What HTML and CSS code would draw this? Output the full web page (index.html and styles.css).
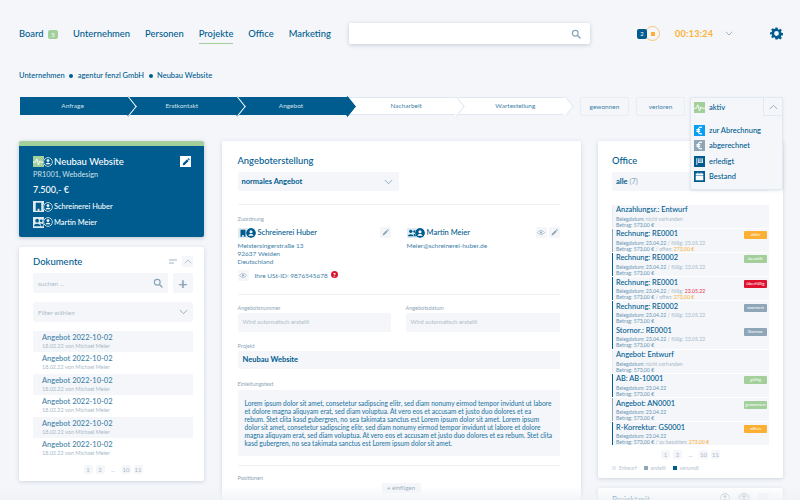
FILE: index.html
```html
<!DOCTYPE html>
<html>
<head>
  <title>Neubau Website</title>
  <link rel="stylesheet" href="styles.css">
</head>
<body>
  <svg class="sprite" width="0" height="0">
    <symbol id="i-search" viewBox="0 0 16 16"><circle cx="6.8" cy="6.8" r="4.6" fill="none" stroke="currentColor" stroke-width="1.9"/><path d="M10.3 10.3L14.5 14.5" fill="none" stroke="currentColor" stroke-width="2.2" stroke-linecap="round"/></symbol>
    <symbol id="i-down" viewBox="0 0 16 10"><path d="M1.5 1.5L8 8l6.5-6.5" fill="none" stroke="currentColor" stroke-width="1.6"/></symbol>
    <symbol id="i-up" viewBox="0 0 16 10"><path d="M1.5 8.5L8 2l6.5 6.5" fill="none" stroke="currentColor" stroke-width="1.6"/></symbol>
    <symbol id="i-gear" viewBox="0 0 24 24"><path fill="currentColor" fill-rule="evenodd" d="M10 1h4l.6 3.1 1.9.8 2.6-1.8 2.8 2.8-1.8 2.6.8 1.9 3.1.6v4l-3.1.6-.8 1.9 1.8 2.6-2.8 2.8-2.6-1.8-1.9.8L14 23h-4l-.6-3.1-1.9-.8-2.6 1.8-2.8-2.8 1.8-2.6-.8-1.9L0 14v-4l3.1-.6.8-1.9-1.8-2.6 2.8-2.8 2.6 1.8 1.9-.8zM12 7.6a4.4 4.4 0 1 0 0 8.8 4.4 4.4 0 0 0 0-8.8z"/></symbol>
    <symbol id="i-pencil" viewBox="0 0 12 12"><path fill="currentColor" d="M1 11l.6-3 6-6 2.4 2.4-6 6zM8.400 1.200l.8-.7a.8.8 0 0 1 1.100 0l1.200 1.200a.8.8 0 0 1 0 1.100l-.7.8z"/></symbol>
    <symbol id="i-eye" viewBox="0 0 16 10"><path fill="none" stroke="currentColor" stroke-width="1.200" d="M1 5c3.500-5 10.500-5 14 0-3.500 5-10.500 5-14 0z"/><circle cx="8" cy="5" r="2" fill="currentColor"/></symbol>
    <symbol id="i-person" viewBox="0 0 14 14"><circle cx="7" cy="7" r="6.200" fill="none" stroke="currentColor" stroke-width="1.100"/><circle cx="7" cy="5" r="2" fill="currentColor"/><path fill="currentColor" d="M3.500 10.300c.3-3 6.700-3 7 0z"/></symbol>
    <symbol id="i-person-solid" viewBox="0 0 14 14"><path fill="currentColor" fill-rule="evenodd" d="M7 0a7 7 0 1 1 0 14A7 7 0 0 1 7 0zm0 3a2.100 2.100 0 1 0 0 4.200A2.100 2.100 0 0 0 7 3zM3.400 10.800h7.200c-.3-3.200-6.900-3.200-7.200 0z"/></symbol>
    <symbol id="i-build" viewBox="0 0 12 12"><path fill="currentColor" d="M3 2h6v8.500H7V8.500H5v2H3z"/></symbol>
    <symbol id="i-people" viewBox="0 0 12 12"><circle cx="4.500" cy="4" r="2" fill="currentColor"/><path fill="currentColor" d="M1 10c.2-3.500 6.800-3.500 7 0z"/><circle cx="9" cy="4.200" r="1.500" fill="currentColor"/><path fill="currentColor" d="M8.500 10h3c0-2.500-2-3-3.500-2.700.3.700.5 1.600.5 2.700z"/></symbol>
    <symbol id="i-pulse" viewBox="0 0 16 16"><path fill="none" stroke="currentColor" stroke-width="1.300" d="M0 9h3.500l2-5 2.500 9 2-6 1 2H16"/></symbol>
    <symbol id="i-euro" viewBox="0 0 16 16"><path fill="none" stroke="currentColor" stroke-width="1.700" d="M11.500 3.500c-3-1.300-5.500.8-5.500 4.500s2.500 5.800 5.500 4.500M3.500 6.700h5.500M3.500 9.300h5.500"/></symbol>
    <symbol id="i-flag" viewBox="0 0 16 16"><path fill="currentColor" d="M3.500 3h1.300v10H3.500zM6 3.500h7v6.500H6z"/><path fill="none" stroke="#005c8f" stroke-width=".7" d="M6.500 5.500h6M6.500 7.500h6M8.500 3.500v6.500M10.500 3.500v6.500"/></symbol>
    <symbol id="i-calendar" viewBox="0 0 16 16"><path fill="currentColor" d="M2.500 7h11v6.500h-11zM2.500 3.500h11V6h-11z"/><path fill="currentColor" d="M5 2h1.200v2H5zM9.800 2H11v2H9.800z"/></symbol>
  </svg>

  <div class="page">
    <header class="topbar">
      <nav class="nav">
        <a class="nav-item nav-board">Board <span class="nav-badge">5</span></a>
        <a class="nav-item">Unternehmen</a>
        <a class="nav-item">Personen</a>
        <a class="nav-item active">Projekte</a>
        <a class="nav-item">Office</a>
        <a class="nav-item">Marketing</a>
      </nav>
      <div class="global-search"><svg class="icon-search"><use href="#i-search"/></svg></div>
      <div class="timer-widget">
        <span class="timer-count">2</span>
        <span class="timer-ring"><span class="timer-dot"></span></span>
      </div>
      <div class="timer">00:13:24</div>
      <svg class="timer-chevron"><use href="#i-down"/></svg>
      <svg class="gear"><use href="#i-gear"/></svg>
    </header>

    <div class="breadcrumb">
      <span>Unternehmen</span><i class="crumb-dot"></i>
      <span>agentur fenzl GmbH</span><i class="crumb-dot"></i>
      <span>Neubau Website</span>
    </div>

    <div class="status-row">
      <div class="stepper">
        <div class="step done">Anfrage</div>
        <div class="step done">Erstkontakt</div>
        <div class="step done">Angebot</div>
        <div class="step">Nacharbeit</div>
        <div class="step">Wartestellung</div>
      </div>
      <div class="outcome">gewonnen</div>
      <div class="outcome">verloren</div>
      <div class="state-menu">
        <div class="state-head">
          <span class="state-tile green"><svg><use href="#i-pulse"/></svg></span>
          <span class="state-current">aktiv</span>
          <span class="state-toggle"><svg><use href="#i-up"/></svg></span>
        </div>
        <div class="state-list">
          <div class="state-item"><span class="state-tile sky"><svg><use href="#i-euro"/></svg></span>zur Abrechnung</div>
          <div class="state-item"><span class="state-tile grey"><svg><use href="#i-euro"/></svg></span>abgerechnet</div>
          <div class="state-item"><span class="state-tile navy"><svg><use href="#i-flag"/></svg></span>erledigt</div>
          <div class="state-item"><span class="state-tile navy"><svg><use href="#i-calendar"/></svg></span>Bestand</div>
        </div>
      </div>
    </div>

    <main class="columns">
      <div class="col">
        <section class="project-card">
          <div class="project-title">
            <span class="duo"><span class="duo-tile green"><svg><use href="#i-pulse"/></svg></span><svg class="duo-person"><use href="#i-person"/></svg></span>
            <span class="project-name">Neubau Website</span>
            <span class="project-edit"><svg><use href="#i-pencil"/></svg></span>
          </div>
          <div class="project-sub">PR1001, Webdesign</div>
          <div class="project-price">7.500,- €</div>
          <div class="project-link"><span class="duo"><span class="duo-tile"><svg><use href="#i-build"/></svg></span><svg class="duo-person"><use href="#i-person"/></svg></span>Schreinerei Huber</div>
          <div class="project-link"><span class="duo"><span class="duo-tile"><svg><use href="#i-people"/></svg></span><svg class="duo-person"><use href="#i-person"/></svg></span>Martin Meier</div>
        </section>

        <section class="card docs-card">
          <div class="docs-head">
            <h2>Dokumente</h2>
            <span class="sort-icon"><i></i><i></i></span>
            <span class="collapse"><svg><use href="#i-up"/></svg></span>
          </div>
          <div class="docs-search">
            <div class="field search-field">suchen ...<svg><use href="#i-search"/></svg></div>
            <div class="add-btn">+</div>
          </div>
          <div class="field filter-field">Filter wählen<svg><use href="#i-down"/></svg></div>
          <div class="doc-list">
            <div class="doc-row"><b>Angebot 2022-10-02</b><small>18.02.22 von Michael Meier</small></div>
            <div class="doc-row"><b>Angebot 2022-10-02</b><small>18.02.22 von Michael Meier</small></div>
            <div class="doc-row"><b>Angebot 2022-10-02</b><small>18.02.22 von Michael Meier</small></div>
            <div class="doc-row"><b>Angebot 2022-10-02</b><small>18.02.22 von Michael Meier</small></div>
            <div class="doc-row"><b>Angebot 2022-10-02</b><small>18.02.22 von Michael Meier</small></div>
            <div class="doc-row"><b>Angebot 2022-10-02</b><small>18.02.22 von Michael Meier</small></div>
          </div>
          <div class="pager"><span>1</span><span>2</span><em>...</em><span>10</span><span>11</span></div>
        </section>
      </div>

      <section class="card offer-card">
        <h2>Angeboterstellung</h2>
        <div class="field offer-type">normales Angebot<svg><use href="#i-down"/></svg></div>
        <hr>
        <label>Zuordnung</label>
        <div class="contacts">
          <div class="contact">
            <div class="contact-head">
              <span class="contact-tile"><svg><use href="#i-build"/></svg><svg class="contact-person"><use href="#i-person-solid"/></svg></span>
              <b>Schreinerei Huber</b>
              <span class="mini-btn"><svg><use href="#i-pencil"/></svg></span>
            </div>
            <p>Meistersingerstraße 13<br>92637 Weiden<br>Deutschland</p>
          </div>
          <div class="contact">
            <div class="contact-head">
              <span class="contact-tile"><svg><use href="#i-people"/></svg><svg class="contact-person"><use href="#i-person-solid"/></svg></span>
              <b>Martin Meier</b>
              <span class="mini-btn"><svg class="eye"><use href="#i-eye"/></svg></span>
              <span class="mini-btn"><svg><use href="#i-pencil"/></svg></span>
            </div>
            <p>Meier@schreinerei-huber.de</p>
          </div>
        </div>
        <div class="vat-row">
          <span class="mini-btn"><svg class="eye"><use href="#i-eye"/></svg></span>
          <span class="vat-text">Ihre USt-ID: 9876545678</span>
          <span class="help">?</span>
        </div>
        <hr>
        <div class="two-fields">
          <div><label>Angebotsnummer</label><div class="input placeholder">Wird automatisch erstellt</div></div>
          <div><label>Angebotsdatum</label><div class="input placeholder">Wird automatisch erstellt</div></div>
        </div>
        <label>Projekt</label>
        <div class="input project-input">Neubau Website</div>
        <label class="intro-label">Einleitungstext</label>
        <div class="intro-text">Lorem ipsum dolor sit amet, consetetur sadipscing elitr, sed diam nonumy eirmod tempor invidunt ut labore et dolore magna aliquyam erat, sed diam voluptua. At vero eos et accusam et justo duo dolores et ea rebum. Stet clita kasd gubergren, no sea takimata sanctus est Lorem ipsum dolor sit amet. Lorem ipsum dolor sit amet, consetetur sadipscing elitr, sed diam nonumy eirmod tempor invidunt ut labore et dolore magna aliquyam erat, sed diam voluptua. At vero eos et accusam et justo duo dolores et ea rebum. Stet clita kasd gubergren, no sea takimata sanctus est Lorem ipsum dolor sit amet.</div>
        <hr class="intro-rule">
        <label class="positions-label">Positionen</label>
        <div class="insert-btn"><span>+</span> einfügen</div>
      </section>

      <div class="col">
        <section class="card office-card">
          <h2>Office</h2>
          <div class="field office-filter"><b>alle</b>&nbsp;<span>(7)</span></div>
          <div class="office-list">
            <div class="office-row"><b>Anzahlungsr.: Entwurf</b><small><u>Belegdatum:</u> nicht vorhanden</small><small><u>Betrag: 573,00 €</u></small></div>
            <div class="office-row mid"><b>Rechnung: RE0001</b><span class="tag orange">aktiv</span><small><u>Belegdatum: 23.04.22</u> / fällig: 23.05.22</small><small><u>Betrag: 573,00 €</u> / offen: <i class="warn">273,00 €</i></small></div>
            <div class="office-row sent"><b>Rechnung: RE0002</b><span class="tag green">bezahlt</span><small><u>Belegdatum: 23.04.22</u> / fällig: 23.05.22</small><small><u>Betrag: 573,00 €</u></small></div>
            <div class="office-row sent"><b>Rechnung: RE0001</b><span class="tag red">überfällig</span><small><u>Belegdatum: 23.04.22</u> / fällig: <i class="late">23.05.22</i></small><small><u>Betrag: 573,00 €</u> / offen: <i class="warn">273,00 €</i></small></div>
            <div class="office-row sent"><b>Rechnung: RE0002</b><span class="tag grey">storniert</span><small><u>Belegdatum: 23.04.22</u> / fällig: 23.05.22</small><small><u>Betrag: 573,00 €</u></small></div>
            <div class="office-row sent"><b>Stornor.: RE0001</b><span class="tag grey">Stornor.</span><small><u>Belegdatum: 23.04.22</u> / fällig: 23.05.22</small><small><u>Betrag: 573,00 €</u></small></div>
            <div class="office-row"><b>Angebot: Entwurf</b><small><u>Belegdatum:</u> nicht vorhanden</small><small><u>Betrag: 573,00 €</u></small></div>
            <div class="office-row sent"><b>AB: AB-10001</b><span class="tag green">gültig</span><small><u>Belegdatum: 23.04.22</u></small><small><u>Betrag: 573,00 €</u></small></div>
            <div class="office-row mid"><b>Angebot: AN0001</b><span class="tag green">gewonnen</span><small><u>Belegdatum: 23.04.22</u></small><small><u>Betrag: 573,00 €</u></small></div>
            <div class="office-row sent"><b>R-Korrektur: GS0001</b><span class="tag orange">offen</span><small><u>Belegdatum: 23.04.22</u></small><small><u>Betrag: 573,00 €</u> / zu bezahlen: <i class="warn">273,00 €</i></small></div>
          </div>
          <div class="pager"><span>1</span><span>2</span><em>...</em><span>10</span><span>11</span></div>
          <div class="legend">
            <span><i class="key draft"></i>Entwurf</span>
            <span><i class="key made"></i>erstellt</span>
            <span><i class="key sent"></i>versandt</span>
          </div>
        </section>
        <section class="card next-card">
          <h2>Projektzeit</h2>
          <svg class="next-person"><use href="#i-person"/></svg>
          <span class="next-pill"><svg class="next-person"><use href="#i-person"/></svg></span>
          <span class="collapse"></span>
        </section>
      </div>
    </main>
  </div>
  <div class="bottom-fade"></div>
</body>
</html>
```

FILE: styles.css
```css
* {
  box-sizing: border-box;
  margin: 0;
  padding: 0;
}

html, body {
  height: 500px;
  overflow: hidden;
}

body {
  font-family: Lato, "Open Sans", sans-serif;
  background-color: #f4f6fa;
  color: #005c8f;
  position: relative;
}

.sprite {
  position: absolute;
}

.page {
  height: 500px;
  padding: 23px 17px 0 19px;
  overflow: hidden;
}

/* top bar */
.topbar {
  display: flex;
  align-items: center;
  height: 21px;
}

.topbar > * {
  flex-shrink: 0;
}

.nav {
  display: flex;
  gap: 15px;
  width: 330px;
  font-size: 9.400px;
  font-weight: 500;
}

.nav-item {
  position: relative;
  line-height: 21px;
  white-space: nowrap;
}

.nav-item.active::after {
  content: "";
  position: absolute;
  left: 0;
  right: 0;
  bottom: 0;
  height: 1px;
  background-color: #a3cf9b;
}

.nav-badge {
  display: inline-block;
  width: 10px;
  height: 9px;
  margin-left: 2px;
  border-radius: 2px;
  background-color: #a3cf9b;
  color: #fff;
  font-size: 6px;
  line-height: 9px;
  text-align: center;
  vertical-align: 0;
}

.global-search {
  display: flex;
  align-items: center;
  justify-content: flex-end;
  width: 241px;
  height: 21px;
  padding-right: 9px;
  background-color: #fff;
  border-radius: 2px;
  box-shadow: 0 1px 4px rgba(60, 80, 110, 0.25);
}

.icon-search {
  width: 10px;
  height: 10px;
  color: #8aa5b8;
}

.timer-widget {
  display: flex;
  align-items: center;
  margin-left: 47px;
}

.timer-count {
  width: 10px;
  height: 10px;
  border-radius: 2px;
  background-color: #005c8f;
  color: #fff;
  font-size: 6px;
  line-height: 10px;
  text-align: center;
  position: relative;
  z-index: 1;
}

.timer-ring {
  display: flex;
  align-items: center;
  justify-content: center;
  width: 15px;
  height: 15px;
  margin-left: -2px;
  border: 1px solid #f9c678;
  border-radius: 50%;
}

.timer-dot {
  width: 4px;
  height: 4px;
  background-color: #fbb034;
}

.timer {
  width: 38px;
  margin-left: 15px;
  color: #fbb034;
  font-size: 9px;
  font-weight: 700;
  letter-spacing: 0.3px;
  white-space: nowrap;
}

.timer-chevron {
  width: 8px;
  height: 5px;
  margin-left: 12px;
  color: #8aa5b8;
}

.gear {
  width: 13px;
  height: 13px;
  margin-left: 37px;
}

/* breadcrumb */
.breadcrumb {
  display: flex;
  align-items: center;
  gap: 4.500px;
  margin-top: 26px;
  font-size: 7.500px;
  font-weight: 500;
  line-height: 12px;
}

.crumb-dot {
  width: 4px;
  height: 4px;
  border-radius: 50%;
  background-color: #005c8f;
}

/* status row */
.status-row {
  display: flex;
  align-items: flex-start;
  margin-top: 15px;
  margin-left: 1px;
  position: relative;
}

.stepper {
  display: flex;
  width: 546px;
  margin-right: 14px;
}

.step {
  position: relative;
  width: 109.200px;
  height: 18px;
  padding-left: 8px;
  background-color: #fff;
  border-top: 1px solid #dfe8f1;
  border-bottom: 1px solid #dfe8f1;
  color: #3f82a8;
  font-size: 6.500px;
  line-height: 16px;
  text-align: center;
}

.step::after {
  content: "";
  position: absolute;
  top: 2px;
  right: -6px;
  width: 12px;
  height: 12px;
  background-color: #fff;
  border-top: 1px solid #dfe8f1;
  border-right: 1px solid #dfe8f1;
  transform: rotate(45deg) skew(6deg, 6deg);
  z-index: 1;
}

.step.done {
  padding: 0 4px 0 0;
  background-color: #005c8f;
  border-color: #005c8f;
  color: #cfe0ea;
}

.step.done::after {
  background-color: #005c8f;
  border-color: #fff;
}

.step.done:nth-child(3)::after {
  border-color: #005c8f;
}

.outcome {
  width: 49px;
  height: 19px;
  margin-right: 7px;
  border: 1px solid #e8edf3;
  border-radius: 2px;
  color: #3f82a8;
  font-size: 6.500px;
  line-height: 17px;
  text-align: center;
}

.state-menu {
  position: absolute;
  top: 0;
  left: 670px;
  width: 93px;
  height: 93px;
  background-color: #f4f6fa;
  border: 1px solid #e3e9f0;
  border-radius: 2px;
  box-shadow: 0 1px 3px rgba(60, 80, 110, 0.12);
  z-index: 3;
}

.state-head {
  display: flex;
  align-items: center;
  height: 18px;
  padding-left: 3px;
  font-size: 7.500px;
  font-weight: 500;
}

.state-tile {
  display: flex;
  align-items: center;
  justify-content: center;
  width: 11px;
  height: 11px;
  margin-right: 4px;
  color: #fff;
}

.state-tile svg {
  width: 11px;
  height: 11px;
}

.green {
  background-color: #a3cf9b;
}

.sky {
  background-color: #0a9ef2;
}

.grey {
  background-color: #8fa6b8;
}

.navy {
  background-color: #005c8f;
}

.state-current {
  flex: 1;
}

.state-toggle {
  display: flex;
  align-items: center;
  justify-content: center;
  width: 19px;
  height: 18px;
  border-left: 1px solid #e3e9f0;
  border-bottom: 1px solid #e3e9f0;
  color: #8aa5b8;
}

.state-toggle svg {
  width: 9px;
  height: 6px;
}

.state-list {
  padding: 7px 3px 0;
}

.state-item {
  display: flex;
  align-items: center;
  height: 15.300px;
  font-size: 7.500px;
  font-weight: 500;
}

/* columns */
.columns {
  display: grid;
  grid-template-columns: 185px 359px 185px;
  gap: 17.500px;
  align-items: start;
  margin-top: 25px;
}

.col {
  display: flex;
  flex-direction: column;
  gap: 10px;
}

.card {
  background-color: #fff;
  border-radius: 2px;
  box-shadow: 0 1px 4px rgba(60, 80, 110, 0.2);
}

h2 {
  font-size: 9.400px;
  font-weight: 500;
  line-height: 13px;
}

svg {
  display: block;
}

.field {
  display: flex;
  align-items: center;
  justify-content: space-between;
  background-color: #f4f6fa;
  border-radius: 2px;
}

/* project card */
.project-card {
  height: 96px;
  padding: 10px 13px 0 14px;
  background-color: #005c8f;
  border-top: 5px solid #a3cf9b;
  border-radius: 2px;
  color: #fff;
  box-shadow: 0 1px 4px rgba(60, 80, 110, 0.3);
}

.project-title {
  display: flex;
  align-items: center;
  height: 11px;
  font-size: 9.500px;
  font-weight: 500;
}

.project-name {
  flex: 1;
}

.project-edit {
  display: flex;
  align-items: center;
  justify-content: center;
  width: 11px;
  height: 11px;
  background-color: #fff;
  color: #005c8f;
}

.project-edit svg {
  width: 8px;
  height: 8px;
}

.duo {
  display: flex;
  align-items: center;
  width: 20px;
  margin-right: 1px;
}

.duo-tile {
  display: flex;
  width: 11px;
  height: 11px;
  background-color: #dfe9f0;
  color: #005c8f;
}

.duo-tile.green {
  background-color: #a3cf9b;
  color: #fff;
}

.duo-tile svg {
  width: 11px;
  height: 11px;
}

.duo-person {
  width: 10px;
  height: 10px;
  margin-left: -1px;
  color: #fff;
  background-color: #005c8f;
  border-radius: 50%;
}

.project-sub {
  margin-top: 3px;
  font-size: 7.300px;
  line-height: 10px;
  color: #cfe0ea;
}

.project-price {
  margin-top: 4px;
  font-size: 9px;
  font-weight: 500;
  line-height: 12px;
}

.project-link {
  display: flex;
  align-items: center;
  height: 11px;
  margin-top: 4.500px;
  font-size: 7.400px;
  font-weight: 500;
}

.project-price + .project-link {
  margin-top: 5px;
}

/* documents */
.docs-card {
  height: 234px;
  padding: 8px 11px 0 14px;
}

.docs-head {
  display: flex;
  align-items: center;
  height: 12px;
}

.docs-head h2 {
  flex: 1;
  font-size: 9.500px;
}

.sort-icon {
  display: flex;
  flex-direction: column;
  gap: 1px;
  margin-right: 5px;
}

.sort-icon i {
  display: block;
  width: 8px;
  height: 2px;
  background-color: #cfd9e3;
}

.sort-icon i + i {
  width: 5px;
}

.collapse {
  display: flex;
  align-items: center;
  justify-content: center;
  width: 11px;
  height: 11px;
  background-color: #f4f6fa;
  color: #a5b8c8;
}

.collapse svg {
  width: 8px;
  height: 5px;
}

.docs-search {
  display: flex;
  justify-content: space-between;
  margin-top: 6px;
}

.search-field {
  width: 135px;
  height: 20px;
  padding: 0 5px 0 5px;
  color: #aebdcb;
  font-size: 6.500px;
}

.search-field svg {
  width: 10px;
  height: 10px;
  color: #8aa5b8;
}

.add-btn {
  width: 20px;
  height: 20px;
  border-radius: 2px;
  background-color: #f4f6fa;
  color: #8aa5b8;
  font-size: 16px;
  font-weight: 700;
  line-height: 19px;
  text-align: center;
}

.filter-field {
  height: 20px;
  margin-top: 9px;
  padding: 0 5px;
  color: #aebdcb;
  font-size: 6.500px;
}

.filter-field svg {
  width: 9px;
  height: 6px;
  color: #8aa5b8;
}

.doc-list {
  margin-top: 9px;
}

.doc-row {
  height: 21.400px;
  padding: 2px 9px 0;
}

.doc-row:nth-child(odd) {
  background-color: #f4f6fa;
}

.doc-row b {
  display: block;
  color: #3f82a8;
  font-size: 7.500px;
  font-weight: 500;
  line-height: 10px;
}

.doc-row small {
  display: block;
  color: #a9bac9;
  font-size: 5.500px;
  line-height: 7px;
}

.pager {
  display: flex;
  align-items: center;
  justify-content: center;
  gap: 3px;
  margin-top: 6px;
  color: #a9bac9;
  font-size: 6px;
}

.pager span {
  width: 9px;
  height: 9px;
  border-radius: 2px;
  background-color: #f4f6fa;
  line-height: 9px;
  text-align: center;
}

.pager em {
  width: 11px;
  font-style: normal;
  text-align: center;
}

/* offer */
.offer-card {
  height: 359px;
  padding: 13px 21px 0 16px;
}

.offer-card h2 {
  height: 13px;
}

.offer-type {
  width: 161px;
  height: 19px;
  margin-top: 5px;
  padding: 0 6px 0 4px;
  font-size: 7.500px;
  font-weight: 700;
}

.offer-type svg {
  width: 9px;
  height: 6px;
  color: #8aa5b8;
}

hr {
  height: 1px;
  margin-top: 13px;
  border: none;
  background-color: #edf1f6;
}

label {
  display: block;
  color: #8ea6b8;
  font-size: 5.500px;
  line-height: 8px;
  margin-top: 10px;
}

.contacts {
  display: grid;
  grid-template-columns: 1fr 1fr;
  gap: 16px;
  margin-top: 4px;
}

.contact-head {
  display: flex;
  align-items: center;
  gap: 2px;
  height: 11px;
}

.contact-head b {
  flex: 1;
  font-size: 7.500px;
  font-weight: 500;
}

.contact-tile {
  position: relative;
  width: 17px;
  height: 10px;
  margin-right: 1px;
  background-color: #dfe9f0;
  border-radius: 1px;
  display: flex;
}

.contact-tile svg {
  width: 10px;
  height: 10px;
}

.contact-person {
  position: absolute;
  top: 0;
  right: -1px;
  background-color: #fff;
  border-radius: 50%;
}

.mini-btn {
  display: flex;
  align-items: center;
  justify-content: center;
  width: 11px;
  height: 11px;
  background-color: #f4f6fa;
  border-radius: 1px;
  color: #8fa6b8;
}

.mini-btn svg {
  width: 7px;
  height: 7px;
}

.mini-btn .eye {
  width: 8px;
  height: 5px;
}

.contact p {
  margin-top: 4px;
  color: #3f82a8;
  font-size: 6.500px;
  line-height: 8px;
}

.vat-row {
  display: flex;
  align-items: center;
  height: 11px;
  margin-top: 4px;
}

.vat-text {
  margin-left: 6px;
  color: #3f82a8;
  font-size: 6.500px;
}

.help {
  width: 7px;
  height: 7px;
  margin: -3px 0 0 3px;
  border-radius: 50%;
  background-color: #d7152e;
  color: #fff;
  font-size: 6px;
  font-weight: 900;
  line-height: 7px;
  text-align: center;
}

.two-fields {
  display: grid;
  grid-template-columns: 153px 154px;
  justify-content: space-between;
}

.two-fields label {
  margin-top: 9px;
}

.input {
  height: 18.500px;
  margin-top: 1px;
  padding: 0 5px;
  background-color: #f4f6fa;
  border-radius: 2px;
  line-height: 18.500px;
}

.placeholder {
  color: #aebdcb;
  font-size: 6px;
}

.project-input {
  font-size: 7.500px;
  font-weight: 700;
}

.intro-label {
  margin-top: 11px;
}

.intro-text {
  height: 66px;
  margin-top: 2px;
  padding: 10px 7px;
  background-color: #f4f6fa;
  border-radius: 2px;
  color: #2d7aa5;
  font-size: 6.550px;
  font-weight: 500;
  line-height: 8px;
}

.intro-rule {
  margin-top: 9px;
}

.positions-label {
  margin-top: 8px;
}

.insert-btn {
  width: 39px;
  height: 10px;
  margin: 1px 0 0 144px;
  background-color: #f4f6fa;
  color: #8fa6b8;
  font-size: 6px;
  line-height: 10px;
  text-align: center;
}

.insert-btn span {
  font-weight: 700;
}

/* office */
.office-card {
  height: 337px;
  padding: 13px 14px 0 14px;
}

.office-filter {
  justify-content: flex-start;
  height: 18.500px;
  margin-top: 5px;
  padding: 0 4px;
  font-size: 7.500px;
}

.office-filter span {
  color: #8fa6b8;
}

.office-list {
  display: flex;
  flex-direction: column;
  gap: .9px;
  margin-top: 14px;
}

.office-row {
  position: relative;
  height: 23.300px;
  padding: .5px 3px 0 3px;
  background-color: #f4f6fa;
  border-left: 1px solid #e6ecf2;
}

.office-row.mid {
  border-left-color: #8fa6b8;
}

.office-row.sent {
  border-left-color: #005c8f;
}

.office-row b {
  display: block;
  font-size: 7.400px;
  font-weight: 500;
  line-height: 10.500px;
}

.office-row small {
  display: block;
  color: #a9bac9;
  font-size: 5.200px;
  line-height: 6px;
}

.office-row u {
  color: #6b96b3;
  text-decoration: none;
}

.warn {
  color: #fbb034;
  font-style: normal;
}

.late {
  color: #e8334a;
  font-style: normal;
}

.tag {
  position: absolute;
  top: 2.500px;
  right: 2px;
  width: 23px;
  height: 8px;
  border-radius: 1px;
  color: #fff;
  font-size: 4.500px;
  line-height: 8px;
  text-align: center;
}

.tag.orange {
  background-color: #fbb034;
}

.tag.red {
  background-color: #e0102f;
}

.office-card .pager {
  margin-top: 4.500px;
}

.legend {
  display: flex;
  gap: 7px;
  margin-top: 6px;
  color: #b5c3cf;
  font-size: 5px;
  line-height: 6px;
}

.legend span {
  display: flex;
  align-items: center;
}

.key {
  width: 4px;
  height: 4px;
  margin-right: 3px;
}

.key.draft {
  background-color: #e6ecf2;
}

.key.made {
  background-color: #8fa6b8;
}

.key.sent {
  background-color: #005c8f;
}

.next-card {
  display: flex;
  align-items: flex-start;
  gap: 6px;
  height: 40px;
  padding: 5px 14px 0;
}

.next-card h2 {
  flex: 1;
  font-size: 8px;
}

.next-person {
  width: 10px;
  height: 10px;
  color: #8fa6b8;
}

.next-pill {
  width: 16px;
  height: 10px;
  padding-left: 3px;
  border-radius: 5px;
  background-color: #f4f6fa;
}

.bottom-fade {
  position: absolute;
  left: 0;
  right: 0;
  bottom: 0;
  height: 14px;
  background: linear-gradient(rgba(245, 247, 250, 0), rgba(240, 242, 246, 0.8));
  z-index: 4;
}
```
